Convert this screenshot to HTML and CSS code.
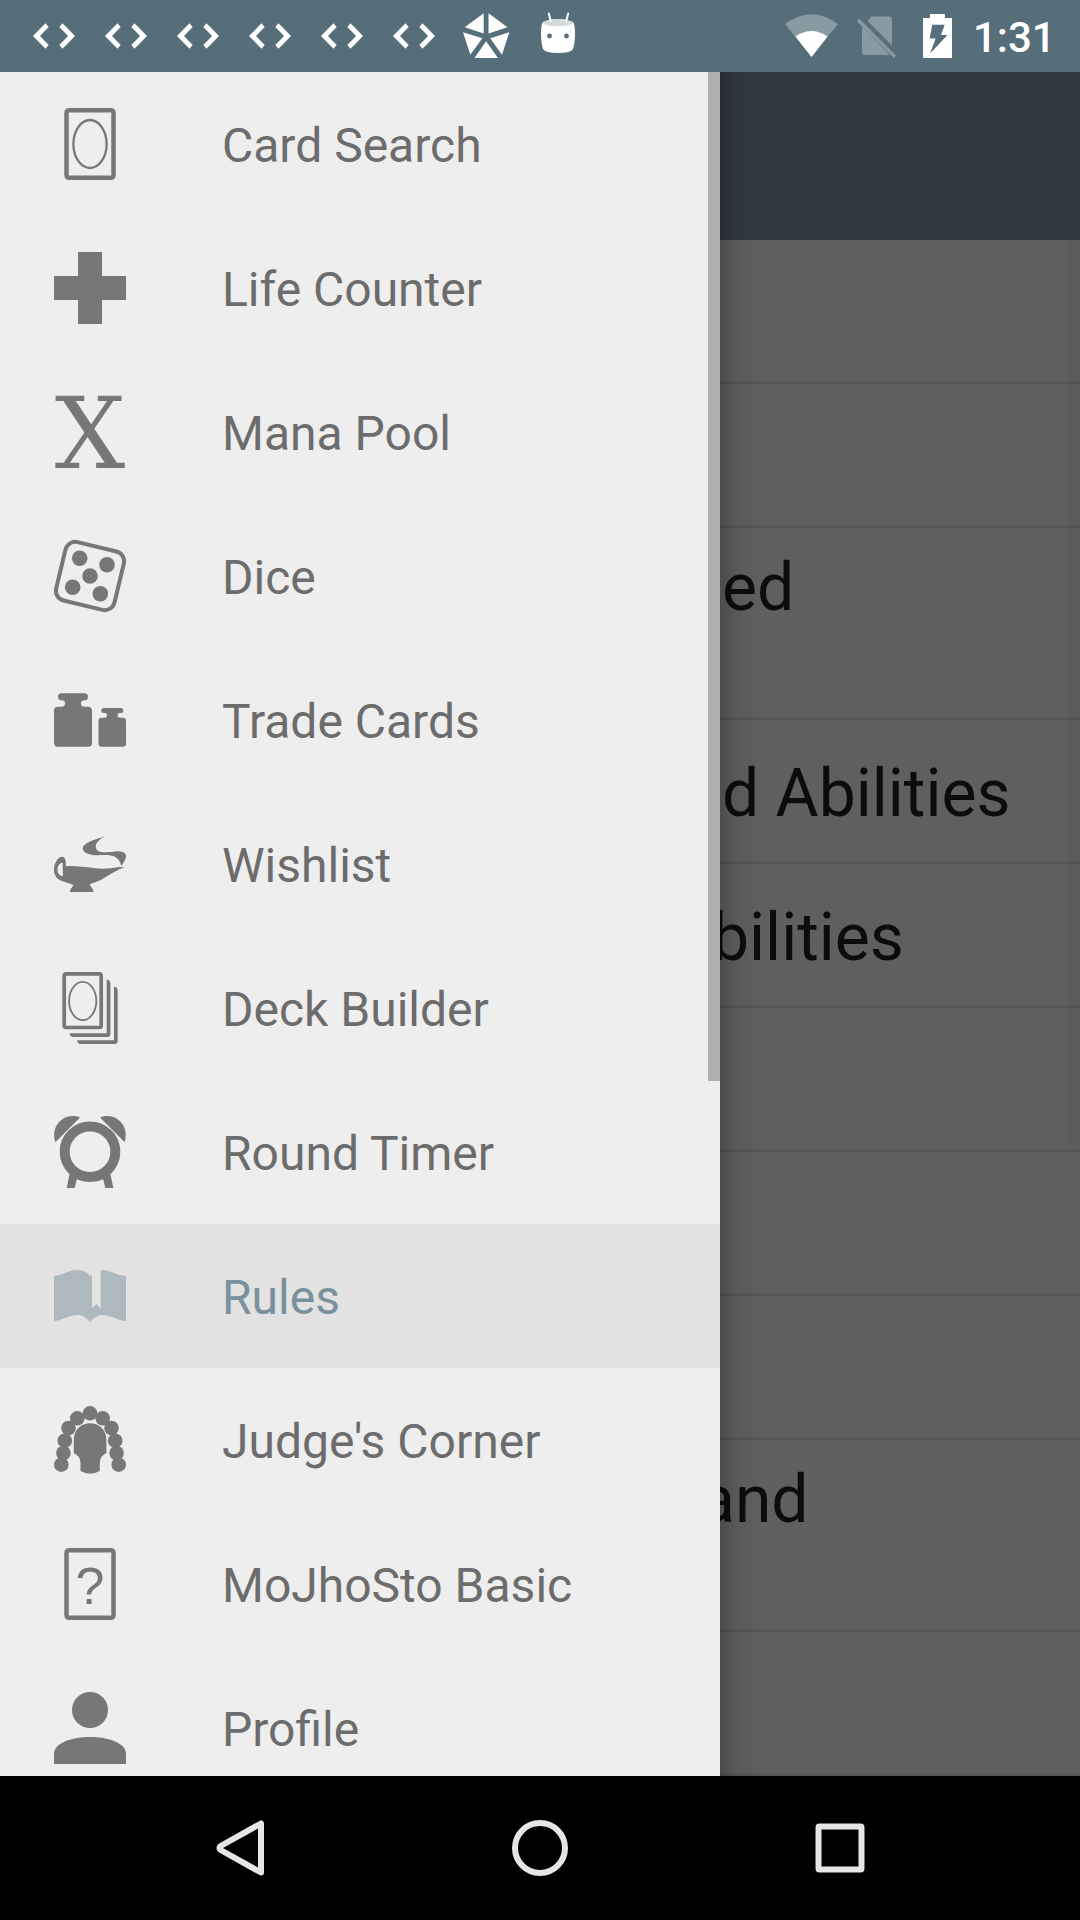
FILE: index.html
```html
<!DOCTYPE html>
<html lang="en">
<head>
<meta charset="utf-8">
<meta name="viewport" content="width=device-width, initial-scale=1">
<title>Rules</title>
<link rel="stylesheet" href="styles.css">
</head>
<body>
<svg class="defs" aria-hidden="true">
  <symbol id="code" viewBox="0 0 72 72"><path d="M15 36 27.5 23.3 30.7 27 22 36 30.7 45 27.5 48.7ZM57 36 44.5 23.3 41.3 27 50 36 41.3 45 44.5 48.7Z"/></symbol>
</svg>

<header class="status-bar">
  <div class="notifications">
    <svg class="status-icon"><use href="#code"/></svg>
    <svg class="status-icon"><use href="#code"/></svg>
    <svg class="status-icon"><use href="#code"/></svg>
    <svg class="status-icon"><use href="#code"/></svg>
    <svg class="status-icon"><use href="#code"/></svg>
    <svg class="status-icon"><use href="#code"/></svg>
    <svg class="status-icon" viewBox="0 0 72 72"><path d="M33.7 13.3V33.5L14.7 27.3ZM38.5 13.3V33.5L57.5 27.3ZM13 32.3 32.3 38.3 20.3 54.7ZM59.3 32.3 40.2 38.3 52 54.7ZM36.1 41.3 24.5 58H48Z"/></svg>
    <svg class="status-icon" viewBox="0 0 72 72">
      <path d="M21 22Q36 16 51 22 53 24 53 34 53 43 51 49 49 53 36 53 23 53 21 49 19 43 19 34 19 24 21 22Z"/>
      <ellipse class="lid" cx="36" cy="22.7" rx="14.5" ry="3.6"/>
      <path class="antenna" d="M26.8 13.5 28.7 21M46.2 13.5 44.2 21"/>
      <circle class="eye" cx="27.5" cy="36" r="2.4"/><circle class="eye" cx="44.5" cy="36" r="2.4"/>
    </svg>
  </div>
  <div class="system">
    <svg class="wifi" viewBox="776 0 72 72"><path class="faint" d="M785 24Q811.5 4.500 838 24L811.500 57Z"/><path d="M795.500 36.500Q811.500 25.500 827.500 36.500L811.500 57Z"/></svg>
    <svg class="sim" viewBox="848 0 60 72"><path class="faint" d="M871.500 16.500H889Q892 16.500 892 19.500V45.500L867.500 21ZM862 26 889.500 54.500Q888.500 55 887 55H865Q862 55 862 52Z"/><path class="faint" d="M859 18.500 896 55.500 894 58 856.800 21Z"/></svg>
    <svg class="battery" viewBox="908 0 60 72"><path fill-rule="evenodd" d="M930 14H945V18H952V58H923V18H930ZM932.300 24.700 929.700 38.500H935.700L930 53.500 947.500 35H941L944.700 24.700Z"/></svg>
    <time class="clock">1:31</time>
  </div>
</header>

<main class="screen">
  <div class="toolbar"></div>
  <ul class="rules">
    <li class="rule"></li>
    <li class="rule"></li>
    <li class="rule rule-tall"><span class="rule-text">ed</span></li>
    <li class="rule"><span class="rule-text">d Abilities</span></li>
    <li class="rule rule-under"><span class="rule-text">bilities</span></li>
    <li class="rule"></li>
    <li class="rule"></li>
    <li class="rule"></li>
    <li class="rule rule-tall rule-deep"><span class="rule-text">and</span></li>
    <li class="rule"></li>
  </ul>
  <div class="list-track"></div>

  <nav class="drawer">
    <a class="item" href="#card-search">
      <svg class="icon" viewBox="0 0 72 72"><rect class="line" x="12.500" y="2.200" width="47" height="67.600" rx="2.500" stroke-width="4.500"/><ellipse class="line" cx="36" cy="36" rx="16.600" ry="24" stroke-width="2.300"/></svg>
      <span class="label">Card Search</span>
    </a>
    <a class="item" href="#life-counter">
      <svg class="icon" viewBox="0 0 72 72"><path d="M24 0H48V24H72V48H48V72H24V48H0V24H24Z"/></svg>
      <span class="label">Life Counter</span>
    </a>
    <a class="item" href="#mana-pool">
      <svg class="icon" viewBox="0 0 72 72" aria-hidden="true"><text class="mana" x="36" y="72" text-anchor="middle">X</text></svg>
      <span class="label">Mana Pool</span>
    </a>
    <a class="item" href="#dice">
      <svg class="icon" viewBox="0 0 72 72"><rect class="line" x="6" y="6" width="60" height="60" rx="10" stroke-width="4" transform="rotate(13.500 36 36)"/><circle cx="25.700" cy="18.300" r="7.800"/><circle cx="53" cy="24.700" r="7.800"/><circle cx="36" cy="36" r="7.800"/><circle cx="18.700" cy="47.200" r="7.800"/><circle cx="46.300" cy="53.700" r="7.800"/></svg>
      <span class="label">Dice</span>
    </a>
    <a class="item" href="#trade-cards">
      <svg class="icon" viewBox="0 0 72 72"><rect x="0" y="22.700" width="38" height="40" rx="4"/><rect x="4" y="9.300" width="30" height="7" rx="3.500"/><path d="M7 16C12.500 16 12.500 23 7 23H31C25.500 23 25.500 16 31 16Z"/><rect x="44.500" y="33.700" width="27.500" height="29" rx="3"/><rect x="47.300" y="24" width="22" height="5" rx="2.500"/><path d="M50 28.700C54 28.700 54 34 50 34H66.500C62.500 34 62.500 28.700 66.500 28.700Z"/></svg>
      <span class="label">Trade Cards</span>
    </a>
    <a class="item" href="#wishlist">
      <svg class="icon" viewBox="0 0 72 72"><path d="M51.300 8.300C41 11.500 28.700 15 28.700 20.500 29 25 36 27.500 44 27.300 54 26.500 65 26 67.300 38 71 33 72 30 72 27.500 71.500 24 67 23 62 23.200 52 24.500 42 26 41.700 18.500 42 14 46 11 51.300 8.300Z"/><path fill-rule="evenodd" d="M8.300 28.700C11 28.700 12 32 12 38.300 26 37 40 41.500 53 40.500 60 40 65 38 70.500 39.500 58 43 49 53 36 56 36 59 39.500 60 39.500 64H16C16 60 19 59.500 19.300 57 15 55 11 54 7.700 53 2 51 0 46 0 41.500 0 35 4 28.700 8.300 28.700ZM8.600 34.700C5.500 34.700 3.500 38 3.500 41.500 3.500 45 5 48 9 48Z"/></svg>
      <span class="label">Wishlist</span>
    </a>
    <a class="item" href="#deck-builder">
      <svg class="icon" viewBox="0 0 72 72"><rect class="line" x="10.200" y="1.900" width="37" height="53.600" rx="2" stroke-width="3.700"/><ellipse class="line" cx="28.700" cy="29" rx="13.600" ry="19.200" stroke-width="1.800"/><path d="M52.700 7.500Q56.400 8 56.400 11V62Q56.400 65 53.400 65H19Q16 65 15.700 61.300H52.700ZM60 14.500Q63.700 15 63.700 18V69Q63.700 72 60.700 72H26.500Q23.500 72 23 68.300H60Z"/></svg>
      <span class="label">Deck Builder</span>
    </a>
    <a class="item" href="#round-timer">
      <svg class="icon" viewBox="0 0 72 72"><circle class="line" cx="36" cy="35.700" r="25.300" stroke-width="10"/><path d="M26 1.500C11-4.500-4 9 1.300 26.300ZM46 1.500C61-4.500 76 9 70.700 26.300ZM15.800 57 23 62.500 20.700 72H12.700ZM56.200 57 49 62.500 51.300 72H59.300Z"/></svg>
      <span class="label">Round Timer</span>
    </a>
    <a class="item selected" href="#rules" aria-current="page">
      <svg class="icon" viewBox="0 0 72 72"><path d="M0 16C9 15 14 10 24 10 30 10 33 13 36.700 16L38 14.700V48.300L42.300 44 46.700 48.300V10C57 10 62 15 72 16V61C64 61 58 55 48 55 42 55 39 59 36 62 33 59 30 55 24 55 14 55 8 61 0 61Z"/></svg>
      <span class="label">Rules</span>
    </a>
    <a class="item" href="#judges-corner">
      <svg class="icon" viewBox="0 0 72 72"><circle cx="36" cy="9.300" r="7.300"/><circle cx="23.300" cy="14.300" r="7.300"/><circle cx="48.700" cy="14.300" r="7.300"/><circle cx="14.500" cy="24" r="7.300"/><circle cx="57.500" cy="24" r="7.300"/><circle cx="10.800" cy="36.700" r="7.300"/><circle cx="61.200" cy="36.700" r="7.300"/><circle cx="9.400" cy="49" r="7.300"/><circle cx="62.600" cy="49" r="7.300"/><circle cx="7.300" cy="60.700" r="7.300"/><circle cx="64.700" cy="60.700" r="7.300"/><path d="M19.800 49.300V36C19.800 13.700 52.400 13.700 52.400 36V49.300Q46 52 45.800 58.500V67Q36 72.500 26.500 67V58.500Q26.200 52 19.800 49.300Z"/></svg>
      <span class="label">Judge's Corner</span>
    </a>
    <a class="item" href="#mojhosto">
      <svg class="icon" viewBox="0 0 72 72"><rect class="line" x="12.500" y="2.200" width="47" height="67.600" rx="2.500" stroke-width="4.500"/><text class="question" x="36" y="56" text-anchor="middle">?</text></svg>
      <span class="label">MoJhoSto Basic</span>
    </a>
    <a class="item" href="#profile">
      <svg class="icon" viewBox="0 0 72 72"><circle cx="36" cy="18" r="18"/><path d="M0 72V62C0 39.300 72 39.300 72 62V72Z"/></svg>
      <span class="label">Profile</span>
    </a>
    <div class="drawer-thumb"></div>
  </nav>
</main>

<footer class="nav-bar">
  <button class="nav-button" aria-label="Back"><svg class="nav-icon" viewBox="0 0 72 72"><path d="M57 11.500V60.500L17.500 38.500Q13.500 36 17.500 33.500Z"/></svg></button>
  <button class="nav-button" aria-label="Home"><svg class="nav-icon" viewBox="0 0 72 72"><circle cx="36" cy="36" r="25"/></svg></button>
  <button class="nav-button" aria-label="Overview"><svg class="nav-icon" viewBox="0 0 72 72"><rect x="14.500" y="14.500" width="43" height="43" rx="1"/></svg></button>
</footer>
</body>
</html>
```
FILE: styles.css
```css
* { box-sizing: border-box; }

body {
  margin: 0;
  height: 100vh;
  display: flex;
  flex-direction: column;
  overflow: hidden;
  background: #000;
  font-family: Roboto, "Noto Sans", sans-serif;
}

.defs { display: none; }

/* Status bar */
.status-bar {
  flex: none;
  height: 72px;
  padding: 0 30px 0 18px;
  display: flex;
  justify-content: space-between;
  background: #566e7a;
  color: #fff;
  fill: #fff;
}
.notifications, .system { display: flex; align-items: center; }
.status-icon, .wifi { width: 72px; height: 72px; }
.sim, .battery { width: 60px; height: 72px; }
.lid { fill: #d3dadd; }
.eye { fill: #566e7a; }
.antenna { stroke: #fff; stroke-width: 2; stroke-linecap: round; }
.faint { fill: #889aa2; }
.clock {
  width: 82px;
  padding: 4px 0 0 5px;
  font-size: 42px;
  font-weight: 500;
  line-height: 48px;
  white-space: nowrap;
}

/* Dimmed page behind the drawer */
.screen {
  flex: 1;
  min-height: 0;
  position: relative;
  overflow: hidden;
  background: #5f5f5f;
}
.toolbar { height: 168px; background: #31383f; }
.rules { margin: 0; padding: 0; list-style: none; }
.rule {
  height: 144px;
  padding: 6px 0 0 722px;
  display: flex;
  align-items: center;
  border-bottom: 3px solid #565656;
  color: #0c0c0c;
  font-size: 66px;
  line-height: 78px;
  white-space: nowrap;
}
.rule-tall { height: 192px; padding-top: 21px; align-items: flex-start; }
.rule-under { padding-left: 712px; }
.rule-deep { padding-left: 699px; }
.list-track {
  position: absolute;
  top: 168px;
  right: 0;
  width: 12px;
  height: 905px;
  background: rgba(0, 0, 0, 0.03);
}

/* Drawer */
.drawer {
  position: absolute;
  top: 0;
  bottom: 0;
  left: 0;
  width: 720px;
  background: #eee;
}
.drawer::after {
  content: "";
  position: absolute;
  top: 0;
  bottom: 0;
  left: 100%;
  width: 40px;
  background: linear-gradient(to right, rgba(0, 0, 0, 0.2), rgba(0, 0, 0, 0.06) 45%, transparent);
}
.item {
  height: 144px;
  padding: 0 54px;
  display: flex;
  align-items: center;
  gap: 96px;
  color: #6c6c6c;
  font-size: 48px;
  line-height: 56px;
  text-decoration: none;
}
.label { padding-top: 4px; }
.selected { background: #e2e2e2; color: #78919d; }
.icon { flex: none; width: 72px; height: 72px; fill: #777; overflow: visible; }
.icon .line { fill: none; stroke: #777; }
.selected .icon { fill: #aeb9bf; }
.mana { font-family: "DejaVu Serif", serif; font-size: 99px; }
.question { font-family: "Liberation Sans", sans-serif; font-size: 52px; }
.drawer-thumb {
  position: absolute;
  top: 0;
  right: 0;
  width: 12px;
  height: 1009px;
  background: #afafaf;
}

/* Navigation bar */
.nav-bar {
  flex: none;
  height: 144px;
  display: flex;
  justify-content: center;
  background: #000;
}
.nav-button {
  width: 300px;
  padding: 0;
  display: flex;
  align-items: center;
  justify-content: center;
  border: 0;
  background: none;
}
.nav-icon {
  width: 72px;
  height: 72px;
  fill: none;
  stroke: #e6e6e6;
  stroke-width: 6;
  stroke-linejoin: round;
}
```
